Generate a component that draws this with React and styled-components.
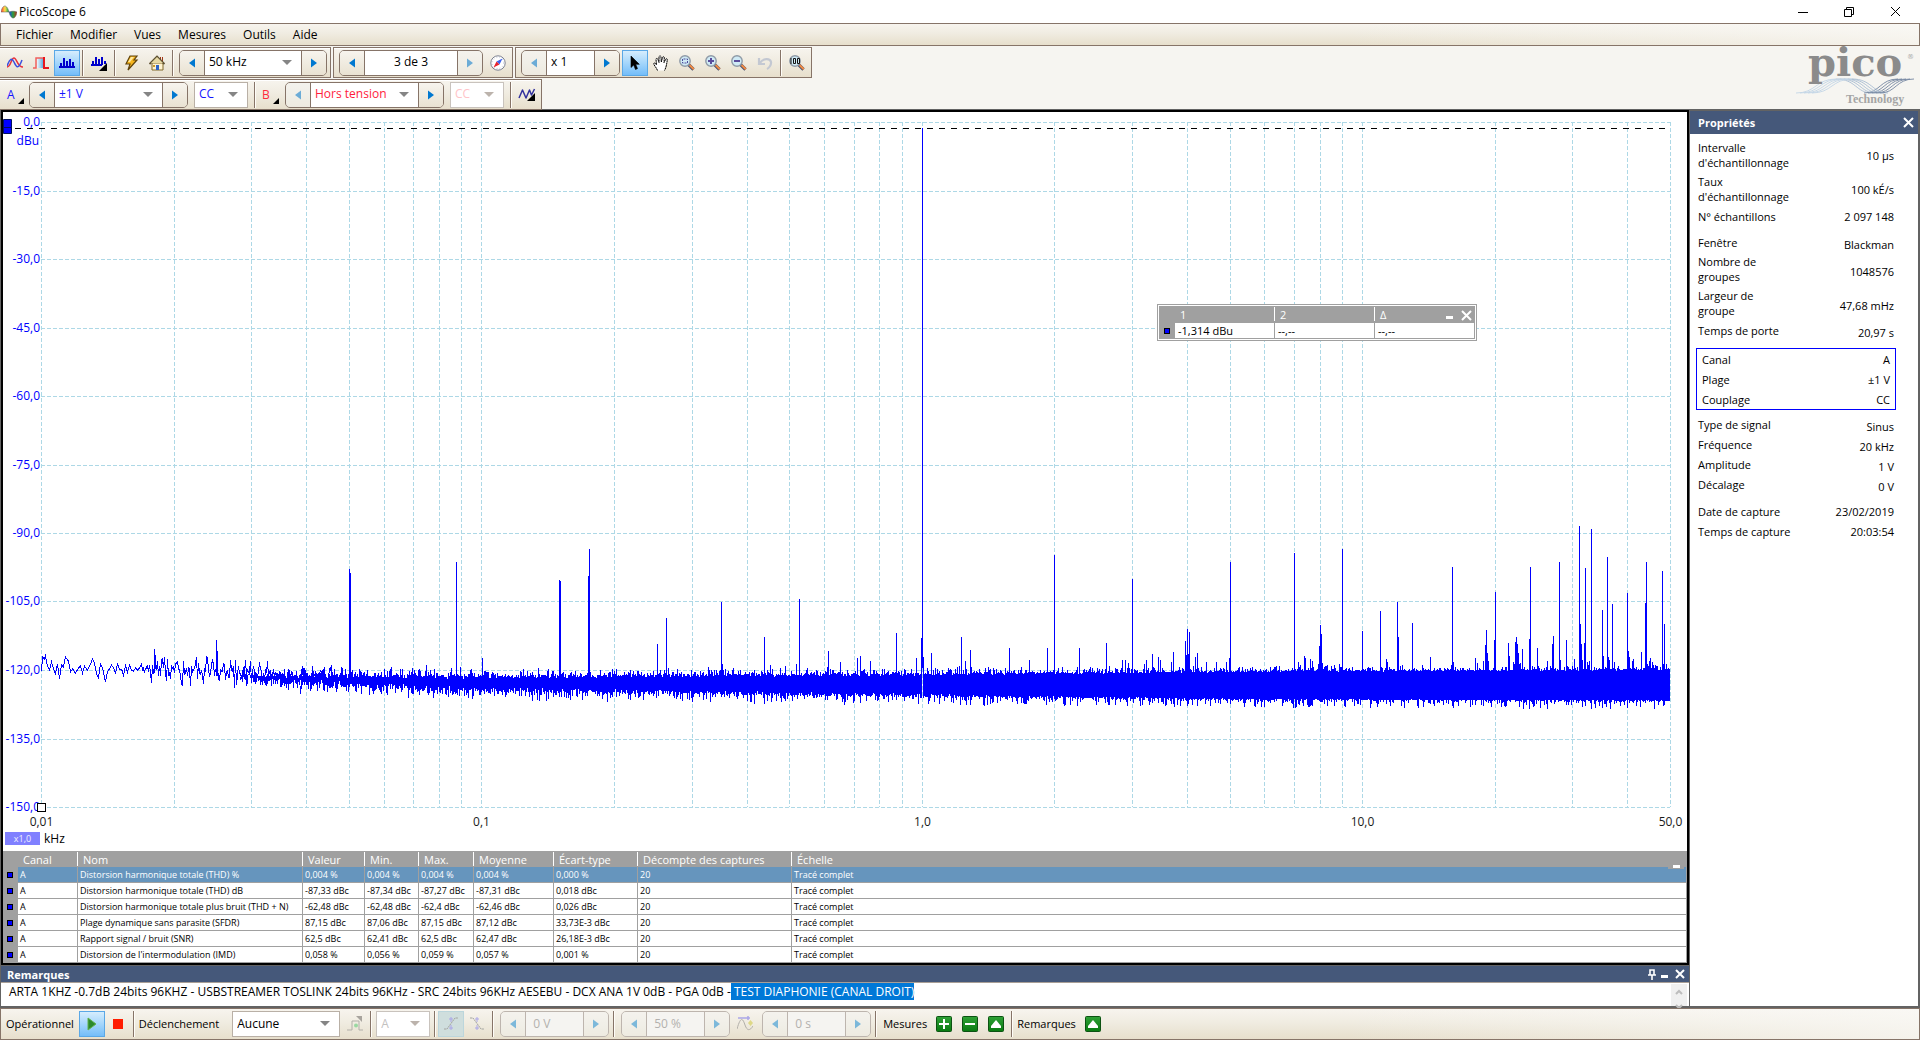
import React, { useEffect, useLayoutEffect, useMemo, useRef, useState } from "react";
import styled, { createGlobalStyle, css } from "styled-components";

const Global = createGlobalStyle`
  * { box-sizing: border-box; }
  body { margin: 0; background: #636363; }
  body, button, input, select, textarea {
    font-family: "Open Sans", "Noto Sans", sans-serif;
    font-size: 12px;
    color: #000;
  }
  button, input, select, textarea { margin: 0; padding: 0; border: 0; border-radius: 0; outline: 0; }
`;

const brown = "#867468";
const grey = "#a0a0a0";
const navy = "#45587a";
const barFill = `linear-gradient(90deg, rgba(250,249,246,0) 70%, rgba(250,249,246,.75)), linear-gradient(#f7f4ee, #f0ece1 45%, #e7dfcc)`;
const groupFill = "linear-gradient(#f7f4ee, #f0ece1 45%, #e7dfcc)";

const Window = styled.div`
  display: flex;
  flex-direction: column;
  height: 100vh;
  overflow: hidden;
  background: #f6f5f1;
`;

const TitleBar = styled.header`
  display: flex;
  align-items: center;
  flex: none;
  height: 23px;
  padding: 0 2px 0 1px;
  background: #fff;
`;
const Title = styled.h1`
  flex: 1;
  margin: 0 0 0 2px;
  font-size: 12px;
  font-weight: 400;
`;
const CaptionButton = styled.button`
  display: grid;
  place-items: center;
  width: 46px;
  height: 22px;
  background: none;
`;

const MenuBar = styled.nav`
  display: flex;
  align-items: center;
  gap: 17px;
  flex: none;
  height: 23px;
  padding: 0 15px;
  border: 1px solid ${brown};
  background: ${barFill};
`;
const MenuItem = styled.button`
  background: none;
  line-height: 16px;
`;

const ToolArea = styled.div`
  display: flex;
  justify-content: space-between;
  flex: none;
  height: 64px;
  border-bottom: 1px solid #636363;
`;
const ToolRows = styled.div`
  display: grid;
  align-content: start;
  gap: 1px;
  padding-top: 1px;
`;
const ToolRow = styled.div`
  display: flex;
  gap: 2px;
`;
const Group = styled.div`
  display: flex;
  align-items: center;
  height: 31px;
  padding: 0 1px 0 ${(p) => (p.$flush ? 2 : 1)}px;
  border: 1px solid ${brown};
  border-left-width: ${(p) => (p.$flush ? 0 : 1)}px;
  background: ${groupFill};
  box-shadow: inset 0 1px #fff;
`;
const Separator = styled.i`
  width: 2px;
  height: 26px;
  margin: 0 ${(p) => p.$after ?? 2}px 0 2px;
  border-left: 1px solid ${brown};
  border-right: 1px solid #fffdf8;
`;
const ToolButton = styled.button`
  display: grid;
  place-items: center;
  flex: none;
  width: 26px;
  height: 26px;
  border: 1px solid transparent;
  background: none;
  ${(p) => p.$on && css`
    border-color: #5ba8e6;
    background: linear-gradient(#d6edfd, #a5d6fb 50%, #74bdf9);
  `}
  ${(p) => p.$faded && css`
    border-color: #bcd6dc;
    background: #cfdedd;
  `}
`;
const ChannelButton = styled.button`
  display: flex;
  align-items: center;
  width: 26px;
  height: 26px;
  padding-left: 5px;
  gap: 3px;
  background: none;
  color: ${(p) => p.$color};
  svg { align-self: end; margin-bottom: 4px; }
`;

const SpinBox = styled.div`
  display: grid;
  grid-template-columns: 24px ${(p) => p.$field}px 24px;
  height: 26px;
  margin: 0 2px 0 ${(p) => p.$left ?? 4}px;
  border: 1px solid ${(p) => (p.$off ? "#bdb5ae" : brown)};
  border-radius: 5px;
  overflow: hidden;
  color: ${(p) => p.$color || "#000"};
`;
const SpinButton = styled.button`
  display: grid;
  place-items: center;
  background: linear-gradient(#f7f4ee, #e9e2d2);
  &:disabled { background: #f3f2ee; opacity: .55; }
`;
const SpinField = styled.div`
  display: grid;
  border: solid ${(p) => (p.$off ? "#bdb5ae" : brown)};
  border-width: 0 1px;
  background: ${(p) => (p.$off ? "#f5f4f1" : "#fff")};
`;
const TextField = styled.input`
  width: 100%;
  min-width: 0;
  padding: 0 ${(p) => (p.$center ? 0 : 4)}px 2px;
  background: none;
  color: inherit;
  text-align: ${(p) => (p.$center ? "center" : "left")};
  &:disabled { padding-left: 7px; color: #b3b1ae; }
`;
const SelectFrame = styled.div`
  display: grid;
  grid-template: 100% / 100%;
  align-items: center;
  min-width: 0;
  color: inherit;
  svg { grid-area: 1 / 1; justify-self: end; margin-right: 9px; pointer-events: none; }
`;
const Select = styled.select`
  grid-area: 1 / 1;
  width: 100%;
  height: 100%;
  padding: 0 20px 2px 4px;
  appearance: none;
  background: none;
  color: inherit;
  &:disabled { opacity: 1; }
`;
const Combo = styled.div`
  display: grid;
  width: ${(p) => p.$width}px;
  height: 26px;
  margin: 0 ${(p) => p.$side ?? 4}px;
  border: 1px solid ${(p) => (p.$off ? "#c9c3bd" : "#b9b0a6")};
  background: #fff;
  color: ${(p) => p.$color || "#000"};
`;

const Body = styled.main`
  display: flex;
  flex: 1;
  min-height: 0;
  padding: 0 2px 2px 1px;
  background: #636363;
`;
const Left = styled.div`
  display: flex;
  flex-direction: column;
  flex: 1;
  min-width: 0;
`;
const View = styled.section`
  display: flex;
  flex-direction: column;
  flex: 1;
  min-height: 0;
  border: 2px solid #000;
  background: #fff;
`;
const ChartArea = styled.div`
  position: relative;
  flex: 1;
  min-height: 0;
  overflow: hidden;
`;
const ChartSvg = styled.svg`
  display: block;
  position: absolute;
  inset: 0;
  font-size: 12px;
`;
const ScaleRow = styled.div`
  position: absolute;
  left: 2px;
  bottom: 4px;
  display: flex;
  align-items: center;
  gap: 4px;
`;
const ScaleChip = styled.button`
  width: 35px;
  height: 13px;
  background: #8080ff;
  color: #f0f0ff;
  font-size: 9px;
  line-height: 13px;
`;

const Ruler = styled.div`
  position: absolute;
  top: 192px;
  right: 210px;
  width: 320px;
  padding: 1px;
  border: 1px solid ${grey};
  background: #fff;
`;
const RulerButtons = styled.div`
  position: absolute;
  top: 2px;
  right: 1px;
  display: flex;
  align-items: center;
  height: 16px;
`;
const GlyphButton = styled.button`
  display: grid;
  place-items: center;
  width: ${(p) => p.$w || 17}px;
  height: 15px;
  background: none;
`;
const Grid = styled.table`
  width: 100%;
  table-layout: fixed;
  border-collapse: separate;
  border-spacing: 0;
  background: ${grey};
  line-height: 15px;
  white-space: nowrap;
`;
const HeadCell = styled.th`
  height: ${(p) => p.$height || 16}px;
  padding: 0 0 0 5px;
  overflow: hidden;
  background: linear-gradient(#fff, #fff) right 1px / 1px 14px no-repeat ${grey};
  ${(p) => p.$plain && css`background: ${grey};`}
  color: #fff;
  font-size: 11px;
  font-weight: 400;
  text-align: left;
`;
const Cell = styled.td`
  height: 16px;
  padding: 0 0 0 ${(p) => p.$pad ?? 2}px;
  overflow: hidden;
  border: solid ${grey};
  border-width: 0 1px 1px 0;
  background: ${(p) => (p.$on ? "#6695bd" : "#fff")};
  color: ${(p) => (p.$on ? "#fff" : "#000")};
  font-size: ${(p) => p.$size || 9}px;
`;
const Gutter = styled.td`
  height: 16px;
  padding: 0 0 0 ${(p) => p.$pad || 4}px;
`;
const Swatch = styled.i`
  display: block;
  width: 6px;
  height: 6px;
  border: 1px solid #000;
  background: #00f;
`;
const Measurements = styled.div`
  position: relative;
  flex: none;
`;
const TableButton = styled.button`
  position: absolute;
  top: 8px;
  right: 3px;
  display: grid;
  place-items: center;
  width: 16px;
  height: 10px;
  background: ${grey};
`;

const Notes = styled.section`
  flex: none;
  padding-top: 1px;
`;
const PanelHead = styled.div`
  display: flex;
  align-items: center;
  height: ${(p) => p.$height}px;
  padding: 0 1px 0 ${(p) => p.$pad}px;
  background: ${navy};
`;
const PanelTitle = styled.h2`
  flex: 1;
  margin: 0;
  color: #fff;
  font-size: 11px;
  font-weight: 700;
`;
const NotesBox = styled.div`
  display: flex;
  height: 24px;
  border-top: 1px solid #a99f96;
  background: #fff;
`;
const NotesText = styled.textarea`
  flex: 1;
  padding: 1px 8px 0;
  overflow: hidden;
  background: none;
  line-height: 16px;
  resize: none;
  &::selection { background: #0078d7; color: #fff; }
`;
const ScrollBar = styled.div`
  display: grid;
  width: 16px;
  margin: 1px 2px 0 0;
  background: #f0f0f0;
`;

const Properties = styled.aside`
  flex: none;
  width: 229px;
  margin-top: 1px;
  padding-left: 1px;
  display: flex;
  flex-direction: column;
`;
const PropBody = styled.div`
  flex: 1;
  padding: 4px 24px 0 8px;
  background: #fff;
`;
const PropList = styled.dl`
  margin: 0 0 ${(p) => p.$gap ?? 0}px;
`;
const BoxedList = styled(PropList)`
  margin: 8px -2px 4px;
  padding: 0 5px;
  border: 1px solid #00f;
`;
const Prop = styled.div`
  display: flex;
  align-items: center;
  justify-content: space-between;
  min-height: 20px;
  font-size: 11px;
  line-height: 15px;
`;
const PropName = styled.dt`
  width: 93px;
  padding: 2px 0;
`;
const PropValue = styled.dd`
  margin: 0;
  padding-top: ${(p) => (p.$drop ? 4 : 0)}px;
`;

const StatusBar = styled.footer`
  display: flex;
  align-items: center;
  flex: none;
  height: 32px;
  padding: 0 5px;
  border: 1px solid ${brown};
  background: ${barFill};
`;
const StatusLabel = styled.span`
  padding: 0 ${(p) => p.$right ?? 4}px 2px ${(p) => p.$left ?? 0}px;
  font-size: 11px;
`;
const Logo = styled.svg`
  flex: none;
  margin: 2px 2px 0 0;
  overflow: visible;
`;

/* ---------- glyphs ---------- */
const Svg = ({ w = 16, h = w, children }) => (
  <svg width={w} height={h} viewBox={`0 0 ${w} ${h}`} fill="none" aria-hidden="true">{children}</svg>
);
const Arrow = ({ right, off }) => (
  <Svg w={8} h={12}><path d={right ? "M1 1.500L7 6 1 10.500z" : "M7 1.500L1 6l6 4.500z"} fill={off ? "#1e8fd6" : "#0078d0"} /></Svg>
);
const Drop = ({ off }) => <Svg w={10} h={6}><path d="M0 0h10L5 5z" fill={off ? "#bcb3ac" : "#858585"} /></Svg>;
const Corner = () => <Svg w={6}><path d="M6 0v6H0z" fill="#000" /></Svg>;
const Close = ({ color = "#fff", s = 11, w = 2 }) => (
  <Svg w={s}><path d={`M1 1L${s - 1} ${s - 1}M${s - 1} 1L1 ${s - 1}`} stroke={color} strokeWidth={w} /></Svg>
);
const Dash = () => <Svg w={7} h={10}><path d="M0 6h7v3H0z" fill="#fff" /></Svg>;
const Pin = () => <Svg w={8} h={11}><path d="M2 6V1h4v5M0 6h8M4 6v5" stroke="#fff" strokeWidth="1.600" /></Svg>;
const Caret = ({ down }) => <Svg w={8} h={6}><path d={down ? "M1 1l3 3 3-3" : "M1 5l3-3 3 3"} stroke="#bdbdbd" strokeWidth="2" /></Svg>;

const AppIcon = () => (
  <Svg>
    <defs>
      <linearGradient id="rainbow"><stop offset="0" stopColor="#f33" /><stop offset=".25" stopColor="#ffe14a" /><stop offset=".45" stopColor="#2fae4a" /><stop offset=".55" stopColor="#1b4fd0" /><stop offset=".75" stopColor="#2aa13a" /><stop offset="1" stopColor="#c2261b" /></linearGradient>
    </defs>
    <path d="M0 8C1.500 0 6 0 8 8c2-1 6-1 8 0-1.500 8-6 8-8 0z" fill="url(#rainbow)" stroke="#555" strokeWidth=".5" />
  </Svg>
);
const Waves = () => (
  <Svg><path d="M0 12C4 12 4 3 7 3s3 9 9 9" stroke="#e8323c" strokeWidth="1.500" /><path d="M0 11C3 3 5 3 7 7s4 9 8-2" stroke="#3a50e0" strokeWidth="1.500" /></Svg>
);
const Pulse = () => (
  <Svg>
    <defs><linearGradient id="pulse"><stop offset="0" stopColor="#eef6fb" /><stop offset="1" stopColor="#4a9fd8" /></linearGradient></defs>
    <path d="M4 3h7v10H4z" fill="url(#pulse)" /><path d="M0 13h3V3h8" stroke="#f0605e" strokeWidth="1.500" /><path d="M11 2v11h5" stroke="#e8161c" strokeWidth="2" />
  </Svg>
);
const Bars = () => <Svg><path d="M0 12h16" stroke="#00c" strokeWidth="2" /><path d="M2 12V8M5 12V3M8 12V6M11 12V4M14 12V7" stroke="#00c" strokeWidth="2" /></Svg>;
const BarsMenu = () => (
  <Svg><path d="M0 10h11M2 10V6M5 10V2M8 10V4M11 10V2M14 9V6" stroke="#00c" strokeWidth="2" /><path d="M16 8v8H8z" fill="#000" /></Svg>
);
const Bolt = () => <Svg><path d="M7 1h7l-3 4h3L5 15l2-6H3z" fill="#f6b51e" stroke="#5f430c" strokeWidth="1.200" /><path d="M8 2h3L7 7H5z" fill="#ffe9a0" /></Svg>;
const House = () => (
  <Svg>
    <path d="M3 8h11v7H3z" fill="#fff3cf" stroke="#80692b" /><path d="M11.500 2v4M13.500 2v5" stroke="#a03818" />
    <path d="M.5 9L8 1.500 15.500 9" stroke="#5c5030" strokeWidth="1.800" /><path d="M2 8l6-6 6 6z" fill="#e7d9a4" />
    <path d="M7 10h3v5H7z" fill="#2d64c8" /><path d="M4 10h2v2H4z" fill="#c99a2a" />
  </Svg>
);
const Compass = () => (
  <Svg><circle cx="8" cy="8" r="7.200" fill="#fff" stroke="#7c8191" /><circle cx="8" cy="8" r="5.600" stroke="#c6cbdb" strokeDasharray="1 2" /><path d="M12.500 3.500L9.500 9.500 6.500 6.500z" fill="#3c62f0" /><path d="M3.500 12.500l3-6 3 3z" fill="#e8242e" /></Svg>
);
const Pointer = () => <Svg w={10} h={16}><path d="M1 1v11.500l2.700-2.500 1.800 4.500 2-.9-1.800-4.300h3.600z" fill="#000" stroke="#000" strokeWidth=".6" /></Svg>;
const Hand = () => (
  <Svg><path d="M4.500 15.500c-.5-2-3-4.500-3.800-6.500 0-1.500 1.600-1.300 2.800.8L3 4.500c0-1.500 1.600-1.500 2 0L6 7.500V2c0-1.500 2-1.500 2 0l.3 5L9.500 2.500c.4-1.400 2-1 1.800.4L11 7.600l1.600-3.200c.6-1.200 2-.6 1.700.6-.5 2.600-.8 7-2.800 10.500" fill="#fff" stroke="#000" strokeDasharray="2 .4" /></Svg>
);
const Magnifier = ({ children }) => (
  <Svg>
    <path d="M9.500 9.500l5 5" stroke="#49506e" strokeWidth="3.200" /><path d="M10.500 10l4.300 4.300" stroke="#f08a42" strokeWidth="2" />
    <circle cx="6" cy="6" r="5.200" fill="#cfeaf5" stroke="#8f9aa6" strokeWidth="1.400" />{children}
  </Svg>
);
const Undo = () => <Svg><path d="M2 3v6h6M3 8c3-5 10-5 11-1 .4 3-2 6-4 7" stroke="#c3c8d2" strokeWidth="2.200" /></Svg>;
const Generator = () => <Svg w={18}><path d="M1 12L4.500 4 8 12l3.500-8 2 5 3-6" stroke="#32329e" strokeWidth="1.500" strokeLinejoin="round" /><path d="M17 7v8H9z" fill="#000" /></Svg>;
const Play = () => <Svg w={10} h={14}><path d="M1 1l8 6-8 6z" fill="#2c8a2c" stroke="#62b24c" /></Svg>;
const Stop = () => <Svg w={10}><path d="M0 0h10v10H0z" fill="#ff1c00" /></Svg>;
const StepIcon = () => <Svg><path d="M0 14h5V5h7v9h4" stroke="#b2afa9" /><path d="M9 0h6v6z" fill="#a8a49e" /><circle cx="9" cy="9.500" r="2" fill="#9ad8a2" /></Svg>;
const Edge = ({ fall }) => (
  <Svg><path d={fall ? "M1 2h3l8 11h3" : "M1 13h3l8-11h3"} stroke="#a3a4a0" strokeDasharray="2 .5" /><path d="M8 1v5M8 9v5M6 3h4M6 12h4" stroke="#aaa6e8" /></Svg>
);
const PreTrigger = () => <Svg><path d="M0 13c4-14 6-10 8-4s5 6 8 1" stroke="#b2afa9" /><path d="M1 2h12M11 0v4" stroke="#aaa6e8" strokeWidth="1.500" /><path d="M13.500 4l2.500 3-2.500 3L11 7z" fill="#ded887" /></Svg>;
const GreenTile = ({ d }) => (
  <Svg>
    <defs><linearGradient id="tile" x2="0" y2="1"><stop offset="0" stopColor="#2fa136" /><stop offset="1" stopColor="#087a10" /></linearGradient></defs>
    <rect x=".5" y=".5" width="15" height="15" rx="1" fill="url(#tile)" stroke="#0c5212" /><path d={d} fill="#fff" />
  </Svg>
);

/* ---------- small composed controls ---------- */
const Picker = ({ label, value, off }) => (
  <SelectFrame>
    <Select aria-label={label} disabled={off} defaultValue={value}><option>{value}</option></Select>
    <Drop off={off} />
  </SelectFrame>
);
const Spinner = ({ label, value, field, pick, center, color, offLeft, offRight, off, left }) => (
  <SpinBox $field={field} $off={off} $color={color} $left={left}>
    <SpinButton aria-label={`${label} -`} disabled={off || offLeft}><Arrow off={off} /></SpinButton>
    <SpinField $off={off}>
      {pick ? <Picker label={label} value={value} /> : <TextField aria-label={label} defaultValue={value} disabled={off} $center={center} />}
    </SpinField>
    <SpinButton aria-label={`${label} +`} disabled={off || offRight}><Arrow right off={off} /></SpinButton>
  </SpinBox>
);

/* ---------- spectrum ---------- */
const SPAN = { x: 41, y: 122, width: 1629, height: 685 };

/* [column, top row] of every harmonic and spurious line */
const PEAKS = [
  [154, 649], [155, 655], [216, 640], [217, 651], [349, 569], [350, 573], [426, 665], [456, 562], [460, 667], [482, 658],
  [559, 580], [560, 581], [588, 576], [589, 549], [657, 644], [666, 618], [721, 602], [722, 664], [764, 637], [770, 665],
  [785, 666], [796, 664], [799, 599], [828, 651], [840, 662], [857, 658], [860, 656], [870, 661], [896, 633], [916, 658],
  [921, 638], [923, 657], [931, 653], [959, 666], [961, 637], [965, 661], [970, 650], [1009, 648], [1029, 660], [1047, 648],
  [1054, 555], [1079, 648], [1106, 643], [1122, 660], [1125, 660], [1128, 663], [1132, 579], [1144, 664], [1146, 660],
  [1152, 654], [1158, 657], [1160, 660], [1171, 662], [1173, 652], [1185, 641], [1186, 655], [1187, 629], [1188, 654],
  [1189, 632], [1195, 657], [1197, 653], [1206, 662], [1216, 662], [1226, 662], [1229, 658], [1230, 562], [1294, 553],
  [1298, 662], [1304, 656], [1305, 658], [1310, 659], [1312, 661], [1318, 664], [1319, 646], [1320, 625], [1321, 634],
  [1322, 663], [1327, 665], [1334, 665], [1339, 664], [1342, 549], [1362, 631], [1380, 611], [1386, 659], [1387, 662],
  [1397, 602], [1398, 637], [1402, 665], [1412, 623], [1430, 657], [1451, 665], [1452, 567], [1453, 662], [1475, 658],
  [1477, 663], [1483, 661], [1485, 645], [1486, 630], [1487, 653], [1488, 661], [1494, 640], [1495, 592], [1508, 643],
  [1509, 656], [1513, 662], [1514, 664], [1515, 642], [1516, 637], [1517, 644], [1518, 653], [1519, 664], [1520, 663],
  [1522, 649], [1529, 639], [1530, 567], [1537, 648], [1547, 661], [1552, 644], [1553, 636], [1559, 562], [1560, 660],
  [1566, 640], [1574, 659], [1579, 526], [1580, 624], [1581, 644], [1582, 660], [1584, 643], [1585, 568], [1587, 662],
  [1589, 661], [1591, 529], [1602, 610], [1603, 656], [1607, 557], [1608, 657], [1609, 660], [1612, 604], [1614, 662],
  [1627, 593], [1628, 651], [1629, 657], [1632, 661], [1633, 659], [1641, 652], [1645, 603], [1646, 562], [1647, 664],
  [1649, 661], [1650, 658], [1652, 662], [1662, 571], [1663, 664], [1664, 624], [1666, 664],
];
const START = [
  [41, 671], [42, 657], [44, 659], [45, 656], [47, 666], [49, 670], [51, 662], [53, 669], [55, 674], [57, 664], [59, 679],
  [61, 665], [63, 667], [65, 657], [68, 661], [70, 672], [72, 669], [75, 673], [78, 668], [80, 666], [82, 673], [84, 666],
  [87, 670], [90, 664], [92, 659], [94, 663], [96, 674], [98, 678], [100, 664], [102, 668], [105, 682], [107, 672], [110, 667],
];
const FLOOR_TOP = [[240, 674], [290, 674], [350, 674], [450, 675], [640, 674], [920, 673], [1280, 670], [1670, 669]];
const FLOOR_END = [[240, 680], [290, 684], [350, 688], [450, 692], [640, 694], [920, 697], [1280, 700], [1670, 701]];
const CARRIER = 922;

const lerp = (table, x) => {
  const i = Math.max(1, table.findIndex((p) => p[0] >= x));
  const [x0, y0] = table[i - 1];
  const [x1, y1] = table[i];
  return y0 + ((y1 - y0) * (x - x0)) / (x1 - x0);
};

function buildTrace(px, py) {
  let seed = 20190223;
  const rnd = () => {
    seed = (seed * 1664525 + 1013904223) % 4294967296;
    return seed / 4294967296;
  };
  const out = [];
  START.forEach(([x, y], i) => out.push(`${i ? "L" : "M"}${px(x)} ${py(y)}`));
  for (let x = 111; x < 340; x += x < 140 ? 2 : 1) {
    const centre = x < 165 ? 669 : 669 + (Math.min(x - 165, 135) / 135) * 9;
    const swing = (rnd() + rnd() - 1) * (x < 150 ? 8 : 17);
    out.push(`L${px(x)} ${py(Math.round(centre + swing))}`);
  }
  for (let x = 240; x < 1670; x += 1) {
    if (x === CARRIER) continue;
    const tail = Math.min(1, Math.max(0, (1300 - x) / 900));
    const top = lerp(FLOOR_TOP, x) - Math.pow(rnd(), 3) * (5 + 3 * tail) + rnd() * (2 + 2 * tail);
    const end = lerp(FLOOR_END, x) + Math.pow(rnd(), 3) * 9 - rnd() * (1 + 5 * tail);
    out.push(`M${px(x)} ${py(Math.round(top))}L${px(x)} ${py(Math.round(end))}`);
  }
  PEAKS.forEach(([x, y]) => {
    const base = x < 165 ? 669 : x < 290 ? 676 : 684;
    out.push(`M${px(x)} ${py(y)}L${px(x)} ${py(base)}`);
  });
  out.push(`M${px(CARRIER)} ${py(128)}L${px(CARRIER)} ${py(668)}`);
  return out.join("");
}

function Spectrum() {
  const host = useRef(null);
  const [size, setSize] = useState({ w: 0, h: 0 });
  useLayoutEffect(() => {
    const read = () => setSize({ w: host.current.clientWidth, h: host.current.clientHeight });
    read();
    const watch = new ResizeObserver(read);
    watch.observe(host.current);
    return () => watch.disconnect();
  }, []);

  const left = 38;
  const top = 10;
  const width = Math.max(1, size.w - 55);
  const height = Math.max(1, size.h - 54);
  const right = left + width;
  const bottom = top + height;
  const trace = useMemo(() => {
    const px = (x) => left + Math.round(((x - SPAN.x) * width) / SPAN.width) + 0.5;
    const py = (y) => top + Math.round(((y - SPAN.y) * height) / SPAN.height);
    return buildTrace(px, py);
  }, [width, height]);

  const freqX = (kHz) => left + Math.round((Math.log10(kHz / 0.01) / Math.log10(5000)) * width) + 0.5;
  const dbY = (db) => top + Math.round((-db / 150) * height) + 0.5;
  const columns = [];
  for (let decade = -2; decade <= 1; decade += 1)
    for (let n = 1; n < 10; n += 1) {
      const f = n * 10 ** decade;
      if (f < 50.1) columns.push(freqX(f));
    }
  const levels = Array.from({ length: 11 }, (_, i) => -15 * i);
  const cursor = top + 6.5;

  return (
    <ChartArea ref={host}>
      <ChartSvg width={size.w} height={size.h} role="img" aria-label="Spectre">
        <g stroke="#add8e6" strokeDasharray="4 2" shapeRendering="crispEdges">
          {columns.map((x) => <line key={x} x1={x} x2={x} y1={top} y2={bottom} />)}
          {levels.map((db) => <line key={db} x1={left} x2={right} y1={dbY(db)} y2={dbY(db)} />)}
        </g>
        <line x1="0" x2={right} y1={cursor} y2={cursor} stroke="#000" strokeDasharray="6 6" shapeRendering="crispEdges" />
        <path d={trace} stroke="#00f" fill="none" shapeRendering="crispEdges" />
        <g fill="#00f" textAnchor="end">
          {levels.map((db) => (
            <text key={db} x={left - 1} y={dbY(db) + 3}>{db === 0 ? "0,0" : `${db},0`}</text>
          ))}
          <text x={left - 2} y={top + 23}>dBu</text>
        </g>
        <g fill="#1a1a1a" textAnchor="middle">
          {[[0.01, "0,01"], [0.1, "0,1"], [1, "1,0"], [10, "10,0"], [50, "50,0"]].map(([f, t]) => (
            <text key={t} x={freqX(f)} y={bottom + 19}>{t}</text>
          ))}
        </g>
        <path d="M.5 7.500h8v14h-8zM0 15.500h9" fill="#00f" stroke="#001060" />
        <rect x={left - 4 + 0.5} y={bottom - 4 + 0.5} width="8" height="8" fill="#fff" stroke="#000" />
      </ChartSvg>
      <ScaleRow><ScaleChip>x1,0</ScaleChip><span>kHz</span></ScaleRow>
      <Ruler>
        <Grid>
          <colgroup><col style={{ width: 16 }} /><col style={{ width: 100 }} /><col style={{ width: 100 }} /><col /></colgroup>
          <thead><tr><HeadCell $plain $height={17} /><HeadCell>1</HeadCell><HeadCell>2</HeadCell><HeadCell $plain>Δ</HeadCell></tr></thead>
          <tbody>
            <tr>
              <Gutter $pad={5}><Swatch /></Gutter>
              <Cell $size={11} $pad={3}>-1,314 dBu</Cell><Cell $size={11} $pad={3}>--,--</Cell><Cell $size={11} $pad={3}>--,--</Cell>
            </tr>
          </tbody>
        </Grid>
        <RulerButtons>
          <GlyphButton aria-label="Réduire"><Dash /></GlyphButton>
          <GlyphButton aria-label="Fermer"><Close /></GlyphButton>
        </RulerButtons>
      </Ruler>
    </ChartArea>
  );
}

/* ---------- measurements ---------- */
const HEADINGS = [["Canal", 60], ["Nom", 225], ["Valeur", 62], ["Min.", 54], ["Max.", 55], ["Moyenne", 80], ["Écart-type", 84], ["Décompte des captures", 154], ["Échelle"]];
const ROWS = [
  ["Distorsion harmonique totale (THD) %", "0,004 %", "0,004 %", "0,004 %", "0,004 %", "0,000 %"],
  ["Distorsion harmonique totale (THD) dB", "-87,33 dBc", "-87,34 dBc", "-87,27 dBc", "-87,31 dBc", "0,018 dBc"],
  ["Distorsion harmonique totale plus bruit (THD + N)", "-62,48 dBc", "-62,48 dBc", "-62,4 dBc", "-62,46 dBc", "0,026 dBc"],
  ["Plage dynamique sans parasite (SFDR)", "87,15 dBc", "87,06 dBc", "87,15 dBc", "87,12 dBc", "33,73E-3 dBc"],
  ["Rapport signal / bruit (SNR)", "62,5 dBc", "62,41 dBc", "62,5 dBc", "62,47 dBc", "26,18E-3 dBc"],
  ["Distorsion de l'intermodulation (IMD)", "0,058 %", "0,056 %", "0,059 %", "0,057 %", "0,001 %"],
];
const MeasurementTable = () => (
  <Measurements>
    <Grid>
      <colgroup><col style={{ width: 15 }} />{HEADINGS.map(([t, w]) => <col key={t} style={{ width: w }} />)}</colgroup>
      <thead><tr><HeadCell $plain />{HEADINGS.map(([t, w]) => <HeadCell key={t} $plain={!w}>{t}</HeadCell>)}</tr></thead>
      <tbody>
        {ROWS.map((r, i) => (
          <tr key={r[0]}>
            <Gutter><Swatch /></Gutter>
            {["A", ...r, "20", "Tracé complet"].map((t, j) => <Cell key={j} $on={i === 0}>{t}</Cell>)}
          </tr>
        ))}
      </tbody>
    </Grid>
    <TableButton aria-label="Réduire"><Dash /></TableButton>
  </Measurements>
);

/* ---------- notes ---------- */
const NOTE = "ARTA 1KHZ -0.7dB 24bits 96KHZ - USBSTREAMER TOSLINK 24bits 96KHz - SRC 24bits 96KHz AESEBU - DCX ANA 1V 0dB - PGA 0dB - TEST DIAPHONIE (CANAL DROIT)";
function NotesPanel() {
  const box = useRef(null);
  useEffect(() => {
    box.current.focus();
    box.current.setSelectionRange(NOTE.indexOf(" TEST"), NOTE.length);
  }, []);
  return (
    <Notes>
      <PanelHead $height={16} $pad={6}>
        <PanelTitle>Remarques</PanelTitle>
        <GlyphButton $w={13} aria-label="Épingler"><Pin /></GlyphButton>
        <GlyphButton $w={13} aria-label="Réduire"><Dash /></GlyphButton>
        <GlyphButton aria-label="Fermer"><Close s={10} /></GlyphButton>
      </PanelHead>
      <NotesBox>
        <NotesText ref={box} aria-label="Remarques" rows={1} spellCheck={false} defaultValue={NOTE} />
        <ScrollBar>
          <GlyphButton $w={16} aria-label="Défiler vers le haut"><Caret /></GlyphButton>
          <GlyphButton $w={16} aria-label="Défiler vers le bas"><Caret down /></GlyphButton>
        </ScrollBar>
      </NotesBox>
    </Notes>
  );
}

/* ---------- properties ---------- */
const Props = ({ rows, drop }) => rows.map(([name, value]) => (
  <Prop key={name}><PropName>{name}</PropName><PropValue $drop={drop}>{value}</PropValue></Prop>
));
const PropertiesPanel = () => (
  <Properties>
    <PanelHead $height={23} $pad={8}>
      <PanelTitle>Propriétés</PanelTitle>
      <GlyphButton aria-label="Fermer"><Close /></GlyphButton>
    </PanelHead>
    <PropBody>
      <PropList $gap={6}>
        <Props rows={[["Intervalle d'échantillonnage", "10 µs"], ["Taux d'échantillonnage", "100 kÉ/s"], ["N° échantillons", "2 097 148"]]} />
      </PropList>
      <PropList>
        <Props drop rows={[["Fenêtre", "Blackman"], ["Nombre de groupes", "1048576"], ["Largeur de groupe", "47,68 mHz"], ["Temps de porte", "20,97 s"]]} />
      </PropList>
      <BoxedList><Props rows={[["Canal", "A"], ["Plage", "±1 V"], ["Couplage", "CC"]]} /></BoxedList>
      <PropList $gap={7}>
        <Props drop rows={[["Type de signal", "Sinus"], ["Fréquence", "20 kHz"], ["Amplitude", "1 V"], ["Décalage", "0 V"]]} />
      </PropList>
      <PropList><Props rows={[["Date de capture", "23/02/2019"], ["Temps de capture", "20:03:54"]]} /></PropList>
    </PropBody>
  </Properties>
);

const PicoLogo = () => (
  <Logo width="124" height="58" viewBox="0 0 124 58" role="img" aria-label="pico Technology">
    {[0, 4, 8, 12, 16].map((d) => (
      <g key={d} fill="none" strokeWidth=".9">
        <path d={`M${2 + d} 45C${22 + d} 45 ${22 + d} 31 ${42 + d} 31`} stroke="#c3d6e6" />
        <path d={`M${42 + d} 31C${62 + d} 31 ${62 + d} 45 ${78 + d} 45`} stroke="#a9bdd2" />
        <path d={`M${70 + d} 45C${86 + d} 45 ${86 + d} 31 ${104 + d} 31`} stroke="#7486a0" />
      </g>
    ))}
    <text x="14" y="28" fill="#8b8b8b" fontFamily="DejaVu Serif, serif" fontSize="40" fontWeight="700">pico</text>
    <text x="113" y="11" fill="#a5a5a5" fontFamily="DejaVu Serif, serif" fontSize="7">®</text>
    <text x="52" y="55" fill="#a5a5a5" fontFamily="Liberation Serif, serif" fontSize="12" fontWeight="700">Technology</text>
  </Logo>
);

export default function App() {
  return (
    <Window>
      <Global />
      <TitleBar>
        <AppIcon />
        <Title>PicoScope 6</Title>
        <CaptionButton aria-label="Réduire"><Svg w={10}><path d="M0 5.500h10" stroke="#000" /></Svg></CaptionButton>
        <CaptionButton aria-label="Restaurer"><Svg w={10}><path d="M.5 2.500h7v7h-7zM2.500 2V.5h7v7H8" stroke="#000" /></Svg></CaptionButton>
        <CaptionButton aria-label="Fermer la fenêtre"><Close color="#000" s={11} w={1} /></CaptionButton>
      </TitleBar>
      <MenuBar>
        {["Fichier", "Modifier", "Vues", "Mesures", "Outils", "Aide"].map((t) => <MenuItem key={t}>{t}</MenuItem>)}
      </MenuBar>
      <ToolArea>
        <ToolRows>
          <ToolRow>
            <Group $flush>
              <ToolButton aria-label="Oscilloscope"><Waves /></ToolButton>
              <ToolButton aria-label="Persistance"><Pulse /></ToolButton>
              <ToolButton aria-label="Spectre" $on><Bars /></ToolButton>
              <Separator />
              <ToolButton aria-label="Options de spectre"><BarsMenu /></ToolButton>
              <Separator />
              <ToolButton aria-label="Configuration auto"><Bolt /></ToolButton>
              <ToolButton aria-label="Accueil"><House /></ToolButton>
              <Separator />
              <Spinner label="Plage de fréquence" value="50 kHz" field={98} pick left={3} />
            </Group>
            <Group>
              <Spinner label="Tampon" value="3 de 3" field={94} center offRight />
              <ToolButton aria-label="Navigateur de tampons"><Compass /></ToolButton>
            </Group>
            <Group>
              <Spinner label="Zoom" value="x 1" field={49} offLeft />
              <ToolButton aria-label="Sélection" $on><Pointer /></ToolButton>
              <ToolButton aria-label="Main"><Hand /></ToolButton>
              <ToolButton aria-label="Zoom fenêtre"><Magnifier><path d="M3.500 4v4h5V4z" stroke="#4c4c9c" strokeDasharray="2 1" /></Magnifier></ToolButton>
              <ToolButton aria-label="Zoom avant"><Magnifier><path d="M3 6h6M6 3v6" stroke="#5a4c9c" strokeWidth="2" /></Magnifier></ToolButton>
              <ToolButton aria-label="Zoom arrière"><Magnifier><path d="M3 6h6" stroke="#5a4c9c" strokeWidth="2" /></Magnifier></ToolButton>
              <ToolButton aria-label="Annuler le zoom"><Undo /></ToolButton>
              <Separator />
              <ToolButton aria-label="Zoom 100"><Magnifier><path d="M2 3v6M4.500 3.500h2v5h-2zM8.500 3.500h2v5h-2z" stroke="#111" /></Magnifier></ToolButton>
            </Group>
          </ToolRow>
          <ToolRow>
            <Group $flush>
              <ChannelButton $color="#1414ff">A<Corner /></ChannelButton>
              <Spinner label="Plage A" value="±1 V" field={109} pick color="#1414ff" left={1} />
              <Combo $width={54} $color="#1414ff"><Picker label="Couplage A" value="CC" /></Combo>
              <Separator $after={1} />
              <ChannelButton $color="#ff2a3c">B<Corner /></ChannelButton>
              <Spinner label="Plage B" value="Hors tension" field={109} pick color="#ff1c3c" offLeft left={2} />
              <Combo $width={54} $off $color="#ffc4c8"><Picker label="Couplage B" value="CC" off /></Combo>
              <Separator />
              <ToolButton aria-label="Générateur de signaux"><Generator /></ToolButton>
            </Group>
          </ToolRow>
        </ToolRows>
        <PicoLogo />
      </ToolArea>
      <Body>
        <Left>
          <View>
            <Spectrum />
            <MeasurementTable />
          </View>
          <NotesPanel />
        </Left>
        <PropertiesPanel />
      </Body>
      <StatusBar>
        <StatusLabel $right={5}>Opérationnel</StatusLabel>
        <ToolButton aria-label="Démarrer" $on><Play /></ToolButton>
        <ToolButton aria-label="Arrêter"><Stop /></ToolButton>
        <Separator />
        <StatusLabel $left={2} $right={11}>Déclenchement</StatusLabel>
        <Combo $width={108} $side={2}><Picker label="Déclenchement" value="Aucune" /></Combo>
        <ToolButton aria-label="Déclenchement avancé"><StepIcon /></ToolButton>
        <Separator />
        <Combo $width={54} $side={2} $off $color="#c3c1bf"><Picker label="Voie" value="A" off /></Combo>
        <Separator />
        <ToolButton aria-label="Front montant" $faded><Edge /></ToolButton>
        <ToolButton aria-label="Front descendant"><Edge fall /></ToolButton>
        <Separator />
        <Spinner label="Seuil" value="0 V" field={59} off />
        <Separator />
        <Spinner label="Pré-déclenchement" value="50 %" field={59} off />
        <ToolButton aria-label="Retard"><PreTrigger /></ToolButton>
        <Spinner label="Délai" value="0 s" field={59} off />
        <Separator />
        <StatusLabel $left={4}>Mesures</StatusLabel>
        <ToolButton aria-label="Ajouter une mesure"><GreenTile d="M7 3h2v4h4v2H9v4H7V9H3V7h4z" /></ToolButton>
        <ToolButton aria-label="Supprimer une mesure"><GreenTile d="M3 7h10v2H3z" /></ToolButton>
        <ToolButton aria-label="Modifier une mesure"><GreenTile d="M8 4l5 6v2H3v-2z" /></ToolButton>
        <Separator />
        <StatusLabel $left={2}>Remarques</StatusLabel>
        <ToolButton aria-label="Afficher les remarques"><GreenTile d="M8 4l5 6v2H3v-2z" /></ToolButton>
      </StatusBar>
    </Window>
  );
}
